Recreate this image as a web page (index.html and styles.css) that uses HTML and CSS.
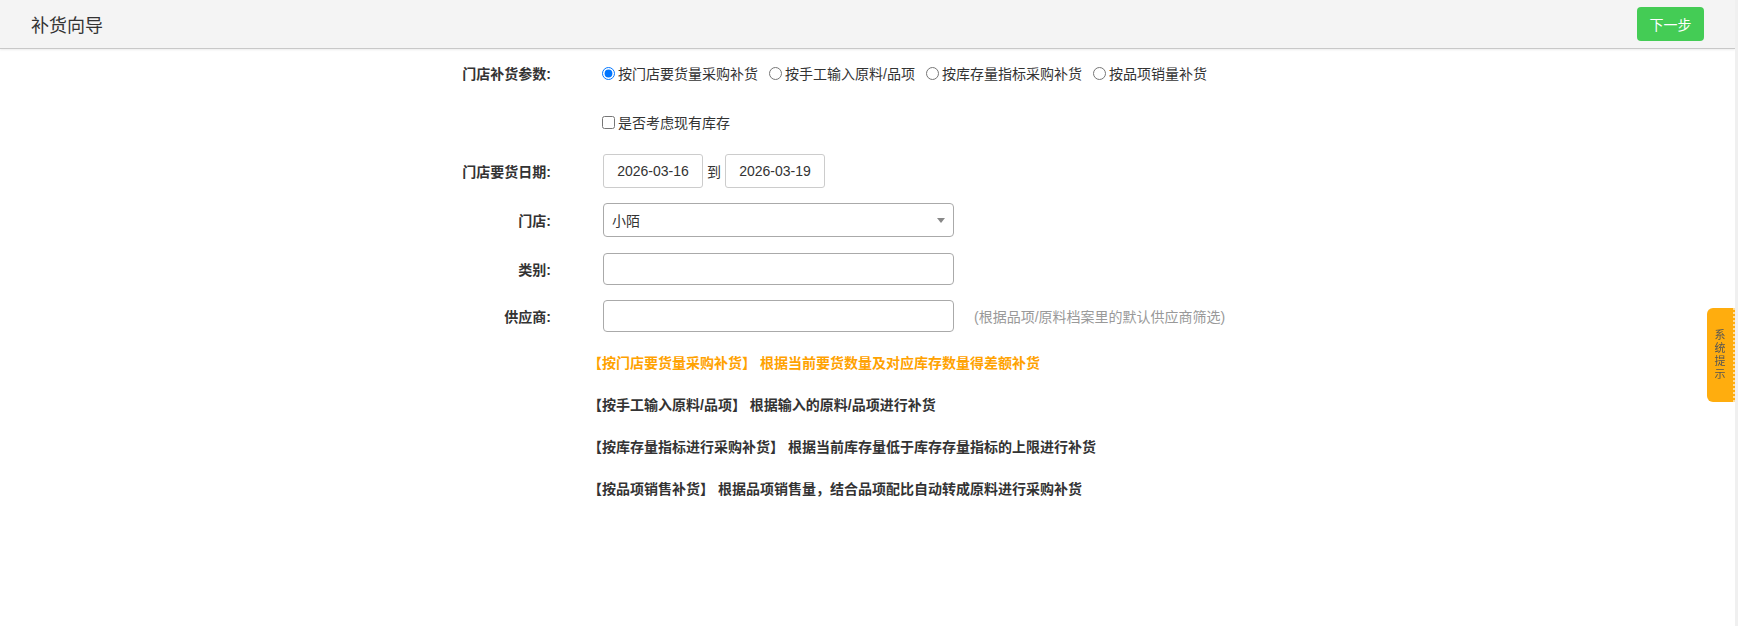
FILE: index.html
```html
<!DOCTYPE html>
<html lang="zh-CN">
<head>
    <meta charset="UTF-8">
    <meta name="viewport" content="width=device-width, initial-scale=1.0">
    <title>补货向导</title>
    <link rel="stylesheet" href="styles.css">
</head>
<body>
    <div class="topbar">
        <h1 class="title">补货向导</h1>
        <button class="btn-next">下一步</button>
    </div>

    <div class="wizard">
        <div class="form-row">
            <label class="form-label">门店补货参数:</label>
            <div class="form-field">
                <label class="opt"><input type="radio" name="mode" checked>按门店要货量采购补货</label>
                <label class="opt"><input type="radio" name="mode">按手工输入原料/品项</label>
                <label class="opt"><input type="radio" name="mode">按库存量指标采购补货</label>
                <label class="opt"><input type="radio" name="mode">按品项销量补货</label>
            </div>
        </div>
        <div class="form-row">
            <label class="form-label"></label>
            <div class="form-field">
                <label class="opt"><input type="checkbox">是否考虑现有库存</label>
            </div>
        </div>
        <div class="form-row">
            <label class="form-label">门店要货日期:</label>
            <div class="form-field">
                <input class="date-input" type="text" value="2026-03-16">
                <span class="to">到</span>
                <input class="date-input" type="text" value="2026-03-19">
            </div>
        </div>
        <div class="form-row store-row">
            <label class="form-label">门店:</label>
            <div class="form-field">
                <div class="select-box">
                    <span>小陌</span>
                    <b class="arrow"></b>
                </div>
            </div>
        </div>
        <div class="form-row compact">
            <label class="form-label">类别:</label>
            <div class="form-field">
                <input class="text-input" type="text">
            </div>
        </div>
        <div class="form-row compact">
            <label class="form-label">供应商:</label>
            <div class="form-field">
                <input class="text-input" type="text">
                <span class="hint">(根据品项/原料档案里的默认供应商筛选)</span>
            </div>
        </div>

        <div class="notes">
            <p class="active">【按门店要货量采购补货】 根据当前要货数量及对应库存数量得差额补货</p>
            <p>【按手工输入原料/品项】 根据输入的原料/品项进行补货</p>
            <p>【按库存量指标进行采购补货】 根据当前库存量低于库存存量指标的上限进行补货</p>
            <p>【按品项销售补货】 根据品项销售量，结合品项配比自动转成原料进行采购补货</p>
        </div>
    </div>

    <div class="tip-tab"><span>系统提示</span></div>
</body>
</html>
```

FILE: styles.css
```css
body {
    margin: 0;
    min-height: 100vh;
    box-sizing: border-box;
    border-right: 3px solid #f0f0f0;
    font-family: "Liberation Sans", "Noto Sans CJK SC", sans-serif;
    font-size: 14px;
    color: #333;
    background: #fff;
}

.topbar {
    display: flex;
    align-items: center;
    justify-content: space-between;
    height: 48px;
    padding: 0 31px 0 31px;
    background: #f4f4f4;
    border-bottom: 1px solid #c8c8c8;
    box-shadow: 0 1px 2px rgba(0, 0, 0, 0.08);
}

.title {
    margin: 0;
    font-size: 18px;
    font-weight: normal;
    color: #333;
}

.btn-next {
    width: 67px;
    height: 34px;
    border: none;
    border-radius: 4px;
    background: #44cc55;
    color: #fff;
    font-family: inherit;
    font-size: 14px;
    cursor: pointer;
}

.wizard {
    padding-top: 7px;
}

.form-row {
    display: grid;
    grid-template-columns: 551px 1fr;
    column-gap: 52px;
    align-items: center;
    min-height: 34px;
    margin-bottom: 15px;
}

.form-row.store-row {
    margin-bottom: 16px;
}

.form-row.compact {
    min-height: 32px;
}

.form-label {
    text-align: right;
    font-weight: bold;
}

.form-field {
    display: flex;
    align-items: center;
}

.opt {
    display: inline-flex;
    align-items: center;
    margin-right: 12px;
}

.opt input {
    width: 13px;
    height: 13px;
    margin: 0 3px 0 -1px;
}

.date-input {
    width: 100px;
    height: 34px;
    box-sizing: border-box;
    border: 1px solid #ccc;
    border-radius: 3px;
    text-align: center;
    font-family: inherit;
    font-size: 14px;
    color: #333;
}

.to {
    margin: 0 4px;
}

.select-box {
    position: relative;
    display: flex;
    align-items: center;
    width: 351px;
    height: 34px;
    box-sizing: border-box;
    padding-left: 8px;
    border: 1px solid #aaa;
    border-radius: 4px;
}

.select-box .arrow {
    position: absolute;
    right: 8px;
    top: 14px;
    border-top: 5px solid #888;
    border-left: 4px solid transparent;
    border-right: 4px solid transparent;
}

.text-input {
    width: 351px;
    height: 32px;
    box-sizing: border-box;
    border: 1px solid #aaa;
    border-radius: 4px;
}

.hint {
    margin-left: 20px;
    color: #999;
}

.notes {
    padding-left: 588px;
    padding-top: 6px;
}

.notes p {
    margin: 0 0 22px;
    line-height: 20px;
    font-weight: bold;
}

.notes p.active {
    color: #ffa200;
}

.tip-tab {
    position: fixed;
    right: 3px;
    top: 308px;
    display: flex;
    align-items: center;
    justify-content: center;
    width: 28px;
    height: 94px;
    box-sizing: border-box;
    background: #ffad0e;
    border-radius: 6px 0 0 6px;
    border-right: 2px dotted rgba(255, 255, 255, 0.6);
}

.tip-tab span {
    width: 11px;
    font-size: 11px;
    line-height: 13px;
    color: #555;
}
```
